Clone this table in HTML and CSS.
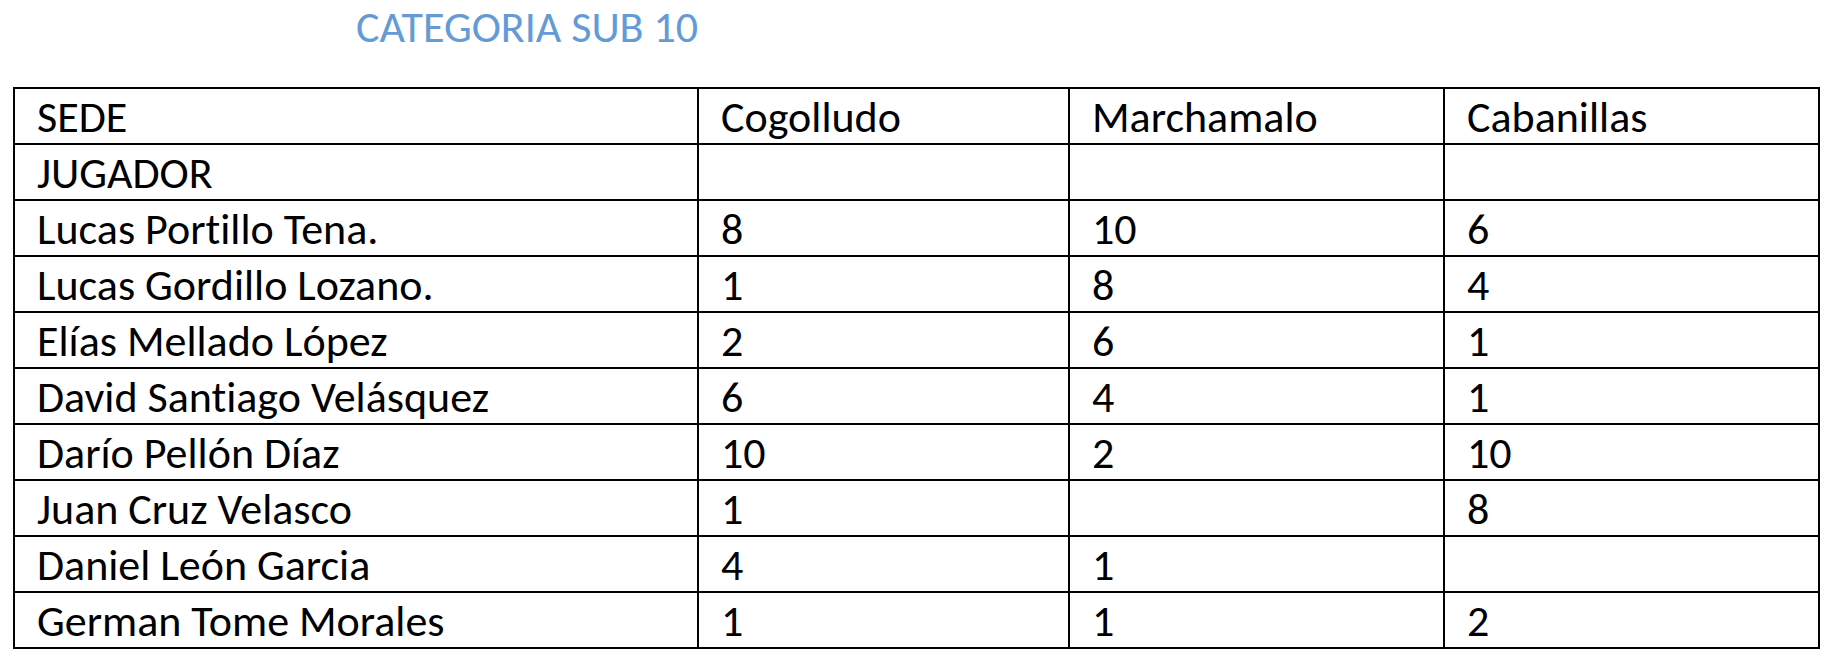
FILE: index.html
```html
<!DOCTYPE html>
<html lang="es">
<head>
<meta charset="utf-8">
<title>Categoria Sub 10</title>
<link rel="stylesheet" href="styles.css">
</head>
<body>
<h1 class="title">CATEGORIA SUB 10</h1>
<table class="grid">
  <colgroup>
    <col class="c-name">
    <col class="c-a">
    <col class="c-b">
    <col class="c-c">
  </colgroup>
  <tbody>
    <tr><td>SEDE</td><td>Cogolludo</td><td>Marchamalo</td><td>Cabanillas</td></tr>
    <tr><td>JUGADOR</td><td></td><td></td><td></td></tr>
    <tr><td>Lucas Portillo Tena.</td><td>8</td><td>10</td><td>6</td></tr>
    <tr><td>Lucas Gordillo Lozano.</td><td>1</td><td>8</td><td>4</td></tr>
    <tr><td>Elías Mellado López</td><td>2</td><td>6</td><td>1</td></tr>
    <tr><td>David Santiago Velásquez</td><td>6</td><td>4</td><td>1</td></tr>
    <tr><td>Darío Pellón Díaz</td><td>10</td><td>2</td><td>10</td></tr>
    <tr><td>Juan Cruz Velasco</td><td>1</td><td></td><td>8</td></tr>
    <tr><td>Daniel León Garcia</td><td>4</td><td>1</td><td></td></tr>
    <tr><td>German Tome Morales</td><td>1</td><td>1</td><td>2</td></tr>
  </tbody>
</table>
</body>
</html>
```

FILE: styles.css
```css
html, body {
  margin: 0;
  padding: 0;
  background: #ffffff;
}

body {
  font-family: Carlito, Lato, "Liberation Sans", sans-serif;
  font-variant-ligatures: none;
  color: #000000;
}

.title {
  margin: 0;
  padding: 0 0 0 356px;
  height: 87px;
  box-sizing: border-box;
  font-size: 44px;
  line-height: normal;
  font-weight: normal;
  color: #649bd6;
}

.grid {
  margin-left: 13px;
  width: 1805px;
  border-collapse: collapse;
  table-layout: fixed;
  border: 2px solid #000;
}

.c-name { width: 684px; }
.c-a { width: 371px; }
.c-b { width: 375px; }
.c-c { width: 375px; }

.grid td {
  border: 2px solid #000;
  height: 52px;
  padding: 2px 10px 0 22px;
  vertical-align: middle;
  font-size: 44px;
  line-height: 46px;
  white-space: nowrap;
}
```
